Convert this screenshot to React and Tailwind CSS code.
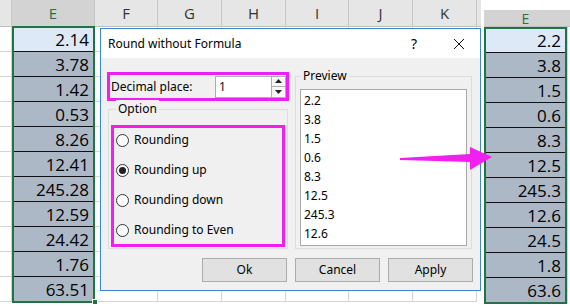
import clsx from 'clsx';

const original = ['2.14', '3.78', '1.42', '0.53', '8.26', '12.41', '245.28', '12.59', '24.42', '1.76', '63.51'];
const rounded = ['2.2', '3.8', '1.5', '0.6', '8.3', '12.5', '245.3', '12.6', '24.5', '1.8', '63.6'];
const options = ['Rounding', 'Rounding up', 'Rounding down', 'Rounding to Even'];

const cellFont = { fontFamily: '"Open Sans", "Noto Sans", sans-serif' };

// plain grid column (no selection)
const GridColumn = ({ width }) => (
  <div className="flex flex-col border-r border-[#d4d4d4]" style={{ width }}>
    {original.map((_, i) => (
      <div key={i} className={clsx('border-b border-[#d4d4d4]', i === 0 ? 'h-[26px]' : 'h-[25px]')} />
    ))}
  </div>
);

// selected column with green border
const SelColumn = ({ values }) => (
  <div className="w-[83px] border-2 border-[#217346] flex flex-col text-[17px] text-black" style={cellFont}>
    {values.map((v, i) => (
      <div
        key={i}
        className={clsx(
          'flex items-center justify-end pr-[4px] leading-none',
          i === 0 ? 'bg-[#dde9f6]' : 'bg-[#adb8c7]',
          i === 0 || i === values.length - 1 ? 'h-[24px]' : 'h-[25px]',
          i < values.length - 1 && 'border-b border-[#111]'
        )}
      >
        {v}
      </div>
    ))}
  </div>
);

const HeaderCell = ({ label, width, active }) => (
  <div
    className={clsx(
      'h-full flex items-center justify-center border-r border-[#c6c6c6] text-[15px]',
      active ? 'bg-[#d3d3d3] text-[#217346]' : 'text-[#333]'
    )}
    style={{ width, ...cellFont }}
  >
    {label}
  </div>
);

const Radio = ({ checked, label }) => (
  <div className="flex items-center h-[30px]">
    <div className="ml-[2px] w-[13px] h-[13px] rounded-full border border-[#333] bg-white flex items-center justify-center">
      {checked && <div className="w-[7px] h-[7px] rounded-full bg-[#222]" />}
    </div>
    <span className="ml-[5px]">{label}</span>
  </div>
);

const Button = ({ children }) => (
  <button className="w-[85px] h-[24px] bg-[#e1e1e1] border border-[#adadad] text-[12px] text-black">
    {children}
  </button>
);

const Dialog = () => (
  <div
    className="absolute left-[100px] top-[28px] w-[381px] h-[263px] border border-[#3a86d4] bg-[#f0f0f0] flex flex-col text-[12px] text-black"
    style={{ fontFamily: '"Noto Sans", "Open Sans", sans-serif' }}
  >
    <div className="h-[29px] bg-white flex items-center pl-[7px]">
      <span>Round without Formula</span>
      <span className="ml-auto text-[14px] mr-[36px]">?</span>
      <svg width="12" height="12" viewBox="0 0 12 12" className="mr-[15px]">
        <path d="M1 1L11 11M11 1L1 11" stroke="#111" strokeWidth="1" />
      </svg>
    </div>

    <div className="flex pl-[6px]">
      <div className="w-[182px] pt-[14px] flex flex-col">
        <div className="h-[29px] border-[3px] border-[#f01ef0] flex items-center">
          <span className="ml-[1px]">Decimal place:</span>
          <div className="ml-auto flex h-[22px]">
            <div className="w-[57px] bg-white border border-[#adadad] flex items-center pl-[3px] text-[#111]">1</div>
            <div className="w-[14px] flex flex-col border border-l-0 border-[#adadad] bg-[#f7f7f7]">
              <div className="flex-1 flex items-center justify-center border-b border-[#adadad]">
                <svg width="7" height="4" viewBox="0 0 7 4"><path d="M3.5 0L7 4H0Z" fill="#222" /></svg>
              </div>
              <div className="flex-1 flex items-center justify-center">
                <svg width="7" height="4" viewBox="0 0 7 4"><path d="M0 0H7L3.5 4Z" fill="#222" /></svg>
              </div>
            </div>
          </div>
        </div>

        <div className="relative mt-[8px] ml-[1px] w-[180px] h-[140px] border border-[#dcdcdc] pt-[15px] px-[2px]">
          <span className="absolute -top-[10px] left-[7px] bg-[#f0f0f0] px-[2px]">Option</span>
          <div className="h-[122px] border-[3px] border-[#f01ef0] flex flex-col">
            <div className="-mt-[3px]">
              {options.map((o, i) => (
                <Radio key={o} label={o} checked={i === 1} />
              ))}
            </div>
          </div>
        </div>
      </div>

      <div className="relative ml-[6px] mt-[18px] w-[177px] h-[173px] border border-[#dcdcdc] pt-[12px] px-[4px]">
        <span className="absolute -top-[10px] left-[5px] bg-[#f0f0f0] px-[2px]">Preview</span>
        <div className="h-[157px] bg-white border border-[#a9a9a9] pl-[3px] pt-[1px]">
          {rounded.slice(0, 8).map((v) => (
            <div key={v} className="h-[19px] flex items-center">{v}</div>
          ))}
        </div>
      </div>
    </div>

    <div className="flex justify-end gap-[8px] pr-[7px] mt-[9px]">
      <Button>Ok</Button>
      <Button>Cancel</Button>
      <Button>Apply</Button>
    </div>
  </div>
);

const Arrow = () => (
  <svg className="absolute left-0 top-0 pointer-events-none" width="570" height="307" viewBox="0 0 570 307">
    <polygon points="400,158 470,154 470,147 492,157 470,170 470,162 400,160" fill="#f020f0" />
  </svg>
);

const cols = [
  { label: 'F', width: 63 },
  { label: 'G', width: 64 },
  { label: 'H', width: 64 },
  { label: 'I', width: 63 },
  { label: 'J', width: 64 },
  { label: 'K', width: 64 },
];

export default function App() {
  return (
    <div className="relative w-[570px] h-[307px] bg-white overflow-hidden flex">
      {/* left sheet */}
      <div className="relative w-[481px] h-full flex flex-col">
        <div className="h-[27px] flex bg-[#e6e6e6] border-b border-[#bdbdbd] shrink-0">
          <HeaderCell label="" width={12} />
          <HeaderCell label="E" width={83} active />
          {cols.map((c) => (
            <HeaderCell key={c.label} label={c.label} width={c.width} />
          ))}
        </div>
        <div className="flex">
          <div className="-mt-[1px]">
            <GridColumn width={12} />
          </div>
          <div className="-mt-[1px] relative">
            <SelColumn values={original} />
            <div className="absolute -right-[3px] bottom-[-2px] w-[6px] h-[6px] bg-[#217346] border border-white" />
          </div>
          {cols.map((c) => (
            <div key={c.label} className="-mt-[1px]">
              <GridColumn width={c.width} />
            </div>
          ))}
        </div>
        <Dialog />
      </div>

      {/* result column */}
      <div className="ml-[3px] pt-[10px] w-[86px] flex flex-col">
        <div className="h-[17px] bg-[#d3d3d3] border-b border-[#bdbdbd] flex items-center justify-center text-[14px] text-[#217346]" style={cellFont}>
          <span className="w-[83px] text-center">E</span>
          <span className="flex-1" />
        </div>
        <div className="flex">
          <SelColumn values={rounded} />
          <div className="flex-1 border-l border-[#d4d4d4]" />
        </div>
      </div>

      <Arrow />
    </div>
  );
}
